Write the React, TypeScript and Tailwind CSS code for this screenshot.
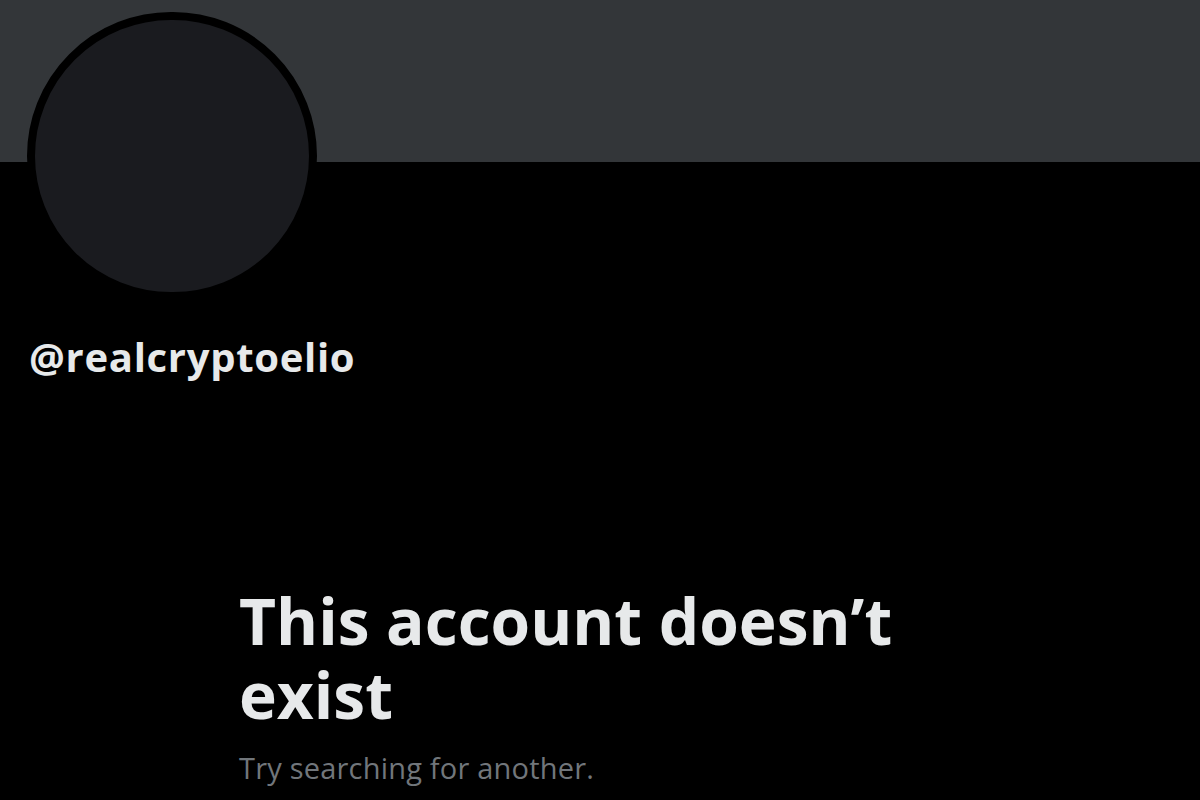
export default function App() {
  return (
    <div className="w-[1200px] h-[800px] bg-black overflow-hidden relative" style={{ fontFamily: '"Open Sans", "Noto Sans", sans-serif' }}>
      <div className="h-[162px] bg-[#333639]" />
      <div className="absolute left-[27px] top-[12px] w-[290px] h-[288px] rounded-full bg-[#1a1b1f] border-[8px] border-black" />
      <div className="pt-[172px] pl-[29px]">
        <div className="text-[#e7e9ea] text-[40px] font-bold leading-[46px] tracking-[0.7px]">@realcryptoelio</div>
      </div>
      <div className="pl-[239px] pt-[204px]">
        <div className="text-[#e7e9ea] text-[64px] font-bold leading-[74px] tracking-[0px] w-[760px]">This account doesn’t exist</div>
        <div className="text-[#71767b] text-[29px] leading-[36px] mt-[18px] tracking-[0.2px]">Try searching for another.</div>
      </div>
    </div>
  );
}
